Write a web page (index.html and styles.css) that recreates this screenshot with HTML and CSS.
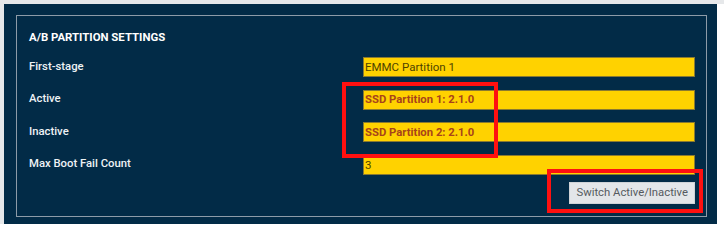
FILE: index.html
```html
<!DOCTYPE html>
<html lang="en">
<head>
    <meta charset="UTF-8">
    <title>A/B Partition Settings</title>
    <link rel="stylesheet" href="styles.css">
</head>
<body>
    <div class="panel">
        <div class="group">
            <h3 class="group-title">A/B Partition Settings</h3>
            <div class="rows">
                <label class="row-label">First-stage</label>
                <input class="field" type="text" value="EMMC Partition 1" readonly>

                <label class="row-label">Active</label>
                <input class="field field-strong" type="text" value="SSD Partition 1: 2.1.0" readonly>

                <label class="row-label">Inactive</label>
                <input class="field field-strong" type="text" value="SSD Partition 2: 2.1.0" readonly>

                <label class="row-label">Max Boot Fail Count</label>
                <input class="field" type="text" value="3" readonly>
            </div>
            <div class="actions">
                <button class="btn">Switch Active/Inactive</button>
            </div>
        </div>
    </div>

    <!-- annotation boxes -->
    <div class="mark mark-partitions"></div>
    <div class="mark mark-button"></div>
</body>
</html>
```

FILE: styles.css
```css
body {
    margin: 0;
    background: #fff;
    font-family: Roboto, 'Liberation Sans', sans-serif;
    position: relative;
    border-top: 4px solid #e6e8ea;
}

.panel {
    background: #022b47;
    margin: 0 7px 5px 4px;
    height: 220px;
    padding: 11px 10px 0 12px;
    box-sizing: border-box;
    box-shadow: -4px 0 0 #e6e8ea;
}

.group {
    border: 1px solid #8d9ba8;
    height: 202px;
    box-sizing: border-box;
    padding: 14px 11px 0 12px;
}

.group-title {
    margin: 0;
    font-size: 11.4px;
    line-height: 14px;
    font-weight: 700;
    text-transform: uppercase;
    color: #fff;
}

.rows {
    display: grid;
    grid-template-columns: 334px 1fr;
    row-gap: 12.6px;
    margin-top: 13px;
    align-items: center;
}

.row-label {
    color: #eef2f5;
    font-size: 11.3px;
    font-weight: 500;
    padding-bottom: 2px;
}

.field {
    height: 20px;
    box-sizing: border-box;
    margin: 0;
    padding: 0 1px;
    border: 1px solid #8a7a30;
    background: #ffd200;
    color: #4e4200;
    font-family: Roboto, 'Liberation Sans', sans-serif;
    font-size: 11.5px;
    outline: none;
}

.field-strong {
    font-weight: 700;
    color: #a8431a;
    font-size: 11.3px;
}

.actions {
    display: flex;
    justify-content: flex-end;
    margin-top: 7px;
}

.btn {
    height: 22px;
    padding: 0 6px;
    border: 1px solid #cfd3d7;
    background: #e3e6e9;
    color: #555a60;
    font-family: Roboto, 'Liberation Sans', sans-serif;
    font-size: 11.3px;
}

.mark {
    position: absolute;
    border: 4px solid #ff1010;
    box-sizing: border-box;
}

.mark-partitions {
    left: 342px;
    top: 78px;
    width: 156px;
    height: 76px;
}

.mark-button {
    left: 547px;
    top: 165px;
    width: 156px;
    height: 44px;
}
```
